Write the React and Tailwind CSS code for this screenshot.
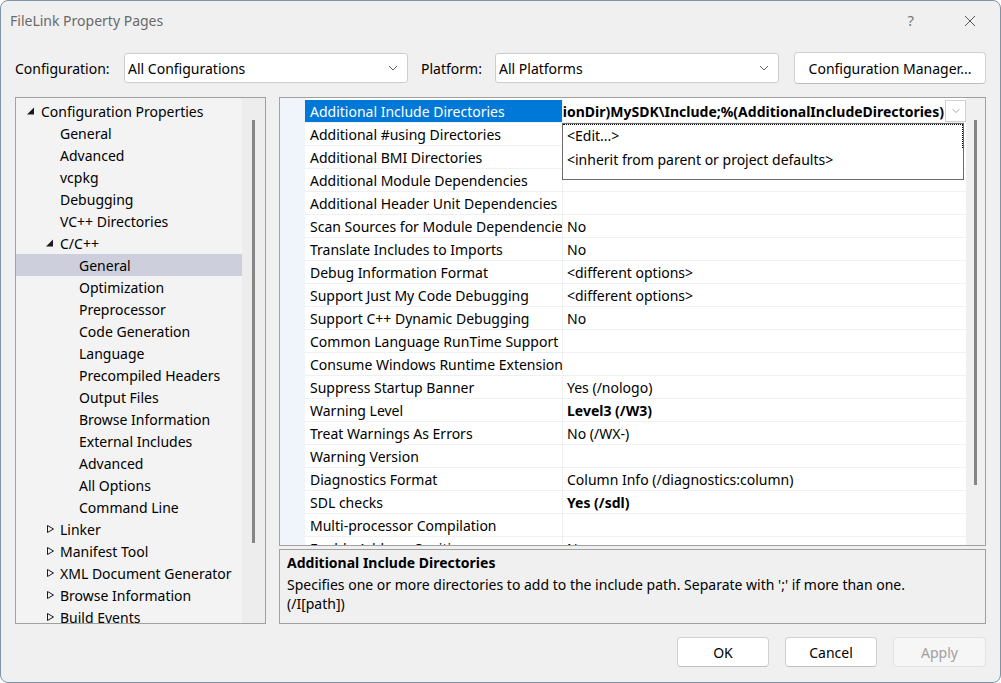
import { ChevronDown } from "lucide-react";

const treeItems = [
  { label: "Configuration Properties", level: 0, arrow: "open" },
  { label: "General", level: 1 },
  { label: "Advanced", level: 1 },
  { label: "vcpkg", level: 1 },
  { label: "Debugging", level: 1 },
  { label: "VC++ Directories", level: 1 },
  { label: "C/C++", level: 1, arrow: "open" },
  { label: "General", level: 2, selected: true },
  { label: "Optimization", level: 2 },
  { label: "Preprocessor", level: 2 },
  { label: "Code Generation", level: 2 },
  { label: "Language", level: 2 },
  { label: "Precompiled Headers", level: 2 },
  { label: "Output Files", level: 2 },
  { label: "Browse Information", level: 2 },
  { label: "External Includes", level: 2 },
  { label: "Advanced", level: 2 },
  { label: "All Options", level: 2 },
  { label: "Command Line", level: 2 },
  { label: "Linker", level: 1, arrow: "closed" },
  { label: "Manifest Tool", level: 1, arrow: "closed" },
  { label: "XML Document Generator", level: 1, arrow: "closed" },
  { label: "Browse Information", level: 1, arrow: "closed" },
  { label: "Build Events", level: 1, arrow: "closed" },
];

const props = [
  { name: "Additional Include Directories", value: "", selected: true },
  { name: "Additional #using Directories", value: "" },
  { name: "Additional BMI Directories", value: "" },
  { name: "Additional Module Dependencies", value: "" },
  { name: "Additional Header Unit Dependencies", value: "" },
  { name: "Scan Sources for Module Dependencies", value: "No" },
  { name: "Translate Includes to Imports", value: "No" },
  { name: "Debug Information Format", value: "<different options>" },
  { name: "Support Just My Code Debugging", value: "<different options>" },
  { name: "Support C++ Dynamic Debugging", value: "No" },
  { name: "Common Language RunTime Support", value: "" },
  { name: "Consume Windows Runtime Extension", value: "" },
  { name: "Suppress Startup Banner", value: "Yes (/nologo)" },
  { name: "Warning Level", value: "Level3 (/W3)", bold: true },
  { name: "Treat Warnings As Errors", value: "No (/WX-)" },
  { name: "Warning Version", value: "" },
  { name: "Diagnostics Format", value: "Column Info (/diagnostics:column)" },
  { name: "SDL checks", value: "Yes (/sdl)", bold: true },
  { name: "Multi-processor Compilation", value: "" },
  { name: "Enable Address Sanitizer", value: "No" },
];

const Arrow = ({ kind }) =>
  kind === "open" ? (
    <svg width="16" height="22" viewBox="0 0 16 22">
      <polygon points="9,7.5 9,14.5 2,14.5" fill="#1b1b1b" />
    </svg>
  ) : (
    <svg width="16" height="22" viewBox="0 0 16 22">
      <polygon points="3.5,7.5 9.5,11 3.5,14.5" fill="none" stroke="#1b1b1b" strokeWidth="1" />
    </svg>
  );

const Select = ({ text }) => (
  <div className="w-[284px] h-[30px] bg-white border border-[#cdcdcd] rounded-[3px] flex items-center pl-[3px] pr-[9px]">
    <span className="flex-1">{text}</span>
    <svg width="10" height="6" viewBox="0 0 10 6">
      <path d="M1 1 L5 5 L9 1" fill="none" stroke="#5c5c5c" strokeWidth="1" />
    </svg>
  </div>
);

const Button = ({ children, disabled, className = "" }) => (
  <button
    className={`h-[30px] rounded-[4px] border ${
      disabled
        ? "bg-[#f6f6f6] border-[#e3e3e3] text-[#a0a0a0]"
        : "bg-white border-[#d1d1d1] border-b-[#c0c0c0] text-black"
    } ${className}`}
  >
    {children}
  </button>
);

export default function App() {
  return (
    <div className="w-[1001px] h-[683px] bg-[#f0f0f0] border border-[#7f93a7] rounded-[8px] overflow-hidden font-['Noto_Sans',sans-serif] text-[14px] text-black">
      {/* title bar */}
      <div className="h-[39px] flex items-center pl-[9px] pr-[24px] text-[#6a6a6a]">
        <span className="flex-1">FileLink Property Pages</span>
        <span className="mr-[50px] text-[15px] text-[#777]">?</span>
        <svg width="12" height="12" viewBox="0 0 12 12">
          <path d="M1 1 L11 11 M11 1 L1 11" stroke="#555" strokeWidth="1" />
        </svg>
      </div>

      {/* configuration row */}
      <div className="mt-[12px] h-[32px] flex items-center px-[14px]">
        <span className="w-[109px]">Configuration:</span>
        <Select text="All Configurations" />
        <span className="ml-[13px] w-[74px]">Platform:</span>
        <Select text="All Platforms" />
        <button className="ml-auto w-[192px] h-[32px] bg-white border border-[#d1d1d1] border-b-[#bdbdbd] rounded-[4px]">
          Configuration Manager...
        </button>
      </div>

      {/* main area */}
      <div className="mt-[13px] h-[527px] flex px-[14px] gap-[13px]">
        {/* category tree */}
        <div className="w-[251px] border border-[#a0a0a0] flex">
          <div className="w-[226px] bg-[#f3f3f3] pt-[2px] overflow-hidden">
            {treeItems.map((item, i) => (
              <div
                key={i}
                className={`h-[22px] flex items-center whitespace-nowrap ${item.selected ? "bg-[#cdd0dc]" : ""}`}
                style={{ paddingLeft: 9 + item.level * 19 }}
              >
                <span className="w-[16px] h-[22px] shrink-0">{item.arrow && <Arrow kind={item.arrow} />}</span>
                <span>{item.label}</span>
              </div>
            ))}
          </div>
          <div className="flex-1 bg-[#ededed] pt-[22px] flex justify-center">
            <div className="w-[3px] h-[423px] bg-[#858585]" />
          </div>
        </div>

        {/* right column */}
        <div className="flex-1 flex flex-col">
          {/* property grid */}
          <div className="h-[449px] border border-[#a0a0a0] flex">
            <div className="w-[25px] bg-[#f0f4fb]" />
            <div className="w-[661px] bg-white pt-[2px] overflow-hidden relative">
              {props.map((p, i) => (
                <div key={i} className="h-[23px] flex border-b border-[#eef0f4]">
                  <div
                    className={`w-[257px] shrink-0 pl-[5px] whitespace-nowrap overflow-hidden leading-[23px] ${
                      p.selected ? "bg-[#0078d7] text-white" : ""
                    }`}
                  >
                    {p.name}
                  </div>
                  <div className="flex-1 border-l border-[#eef0f4] relative">
                    {p.selected ? (
                      <div className="flex h-[22px]">
                        <div className="w-[381px] overflow-hidden flex justify-end leading-[23px] font-bold whitespace-nowrap">
                          <span>$(SolutionDir)MySDK\Include;%(AdditionalIncludeDirectories)</span>
                        </div>
                        <div className="ml-[1px] w-[21px] h-[22px] border border-[#d0d0d0] bg-white flex items-center justify-center">
                          <ChevronDown size={12} strokeWidth={1.2} color="#666" />
                        </div>
                      </div>
                    ) : (
                      <div className={`pl-[4px] leading-[23px] whitespace-nowrap ${p.bold ? "font-bold" : ""}`}>{p.value}</div>
                    )}
                  </div>
                </div>
              ))}

              {/* value dropdown list */}
              <div className="absolute left-[257px] top-[25px] w-[402px] h-[57px] bg-white border border-[#6b6b6b]">
                <div className="h-[24px] leading-[22px] pl-[4px] border border-dotted border-black border-l-0 border-b-0">
                  &lt;Edit...&gt;
                </div>
                <div className="h-[24px] leading-[24px] pl-[4px]">&lt;inherit from parent or project defaults&gt;</div>
              </div>
            </div>
            <div className="flex-1 bg-[#f0f0f0] pt-[22px] flex justify-center">
              <div className="w-[3px] h-[365px] bg-[#858585]" />
            </div>
          </div>

          {/* description */}
          <div className="mt-[3px] flex-1 border border-[#a0a0a0] bg-[#f0f0f0] px-[7px] pt-[3px] leading-[20px]">
            <div className="font-bold">Additional Include Directories</div>
            <div className="mt-[2px]">Specifies one or more directories to add to the include path. Separate with ';' if more than one.</div>
            <div className="-mt-[1px]">(/I[path])</div>
          </div>
        </div>
      </div>

      {/* dialog buttons */}
      <div className="mt-[13px] flex justify-end gap-[16px] px-[14px]">
        <Button className="w-[92px]">OK</Button>
        <Button className="w-[92px]">Cancel</Button>
        <Button className="w-[93px]" disabled>
          Apply
        </Button>
      </div>
    </div>
  );
}
